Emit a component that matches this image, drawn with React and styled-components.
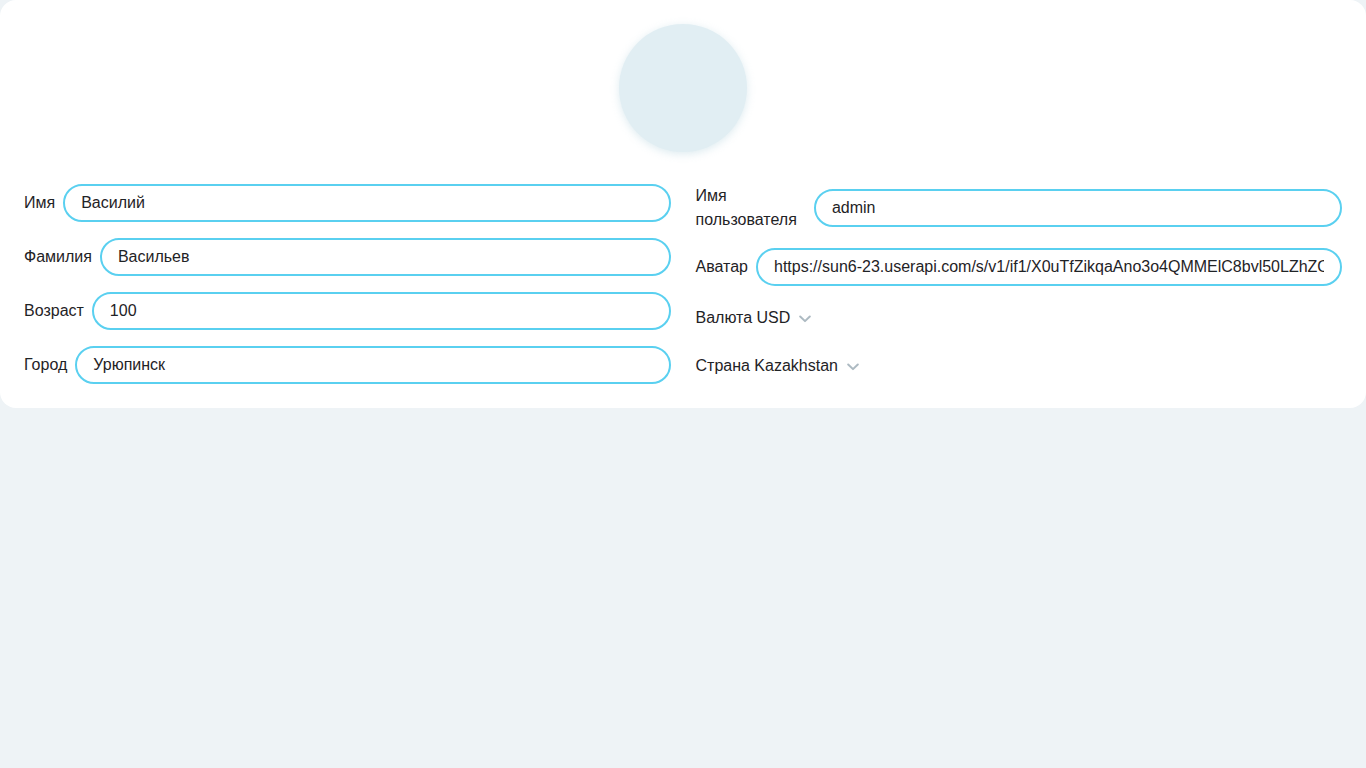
import React from "react";
import styled, { createGlobalStyle } from "styled-components";

const GlobalStyle = createGlobalStyle`
  html, body {
    margin: 0;
    padding: 0;
    background: #eef3f6;
    font-family: "Liberation Sans", Arial, sans-serif;
    color: #1f2326;
  }
  * {
    box-sizing: border-box;
  }
`;

const left = [
  { label: "Имя", value: "Василий" },
  { label: "Фамилия", value: "Васильев" },
  { label: "Возраст", value: "100" },
  { label: "Город", value: "Урюпинск" },
];

function App() {
  return (
    <>
      <GlobalStyle />
      <Page>
        <Card>
          <AvatarRow>
            <Avatar />
          </AvatarRow>
          <Columns>
            <Column>
              {left.map((f) => (
                <Field key={f.label}>
                  <Label>{f.label}</Label>
                  <Input defaultValue={f.value} />
                </Field>
              ))}
            </Column>
            <Column>
              <Field>
                <Label>Имя пользователя</Label>
                <Input defaultValue="admin" />
              </Field>
              <Field>
                <Label>Аватар</Label>
                <Input defaultValue="https://sun6-23.userapi.com/s/v1/if1/X0uTfZikqaAno3o4QMMElC8bvl50LZhZOa3kQ_s3vGq1wN" />
              </Field>
              <Select>
                Валюта USD
                <Chevron />
              </Select>
              <Select>
                Страна Kazakhstan
                <Chevron />
              </Select>
            </Column>
          </Columns>
        </Card>
      </Page>
    </>
  );
}

function Chevron() {
  return (
    <ChevronSvg width="12" height="8" viewBox="0 0 12 8" fill="none">
      <path d="M1.2 1.5l4.8 4.6 4.8-4.6" stroke="#adbac2" strokeWidth="2" strokeLinecap="round" strokeLinejoin="round" />
    </ChevronSvg>
  );
}

export default App;

const Page = styled.div`
  min-height: 768px;
  background: #eef3f6;
`;

const Card = styled.div`
  background: #ffffff;
  border-radius: 16px;
  padding: 24px;
`;

const AvatarRow = styled.div`
  display: flex;
  justify-content: center;
  margin-bottom: 32px;
`;

const Avatar = styled.div`
  width: 128px;
  height: 128px;
  border-radius: 50%;
  background: #e1eef3;
  box-shadow: 0 2px 8px rgba(180, 210, 222, 0.45);
`;

const Columns = styled.div`
  display: grid;
  grid-template-columns: 1fr 1fr;
  column-gap: 25px;
`;

const Column = styled.div`
  display: flex;
  flex-direction: column;
  gap: 16px;
`;

const Field = styled.label`
  display: flex;
  align-items: center;
  gap: 8px;
`;

const Label = styled.span`
  font-size: 16px;
  line-height: 24px;
`;

const Input = styled.input`
  flex: 1 1 100%;
  width: 100%;
  min-width: 0;
  height: 38px;
  padding: 0 16px;
  border: 2px solid #5ad0f0;
  border-radius: 19px;
  font-family: "Liberation Sans", Arial, sans-serif;
  font-size: 16px;
  color: #1f2326;
  background: #ffffff;
  outline: none;
`;

const Select = styled.div`
  display: flex;
  align-items: center;
  gap: 9px;
  height: 32px;
  font-size: 16px;
  cursor: pointer;
`;

const ChevronSvg = styled.svg`
  flex-shrink: 0;
  margin-top: 1px;
`;
